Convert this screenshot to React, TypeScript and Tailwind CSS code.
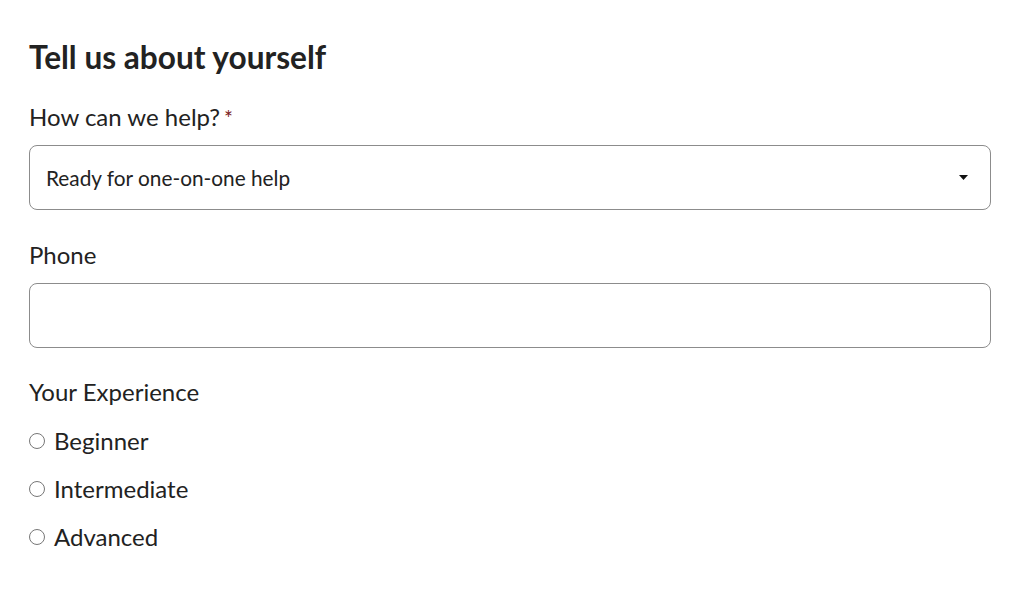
const OPTIONS = ["Beginner", "Intermediate", "Advanced"];

export default function App() {
  return (
    <div className="min-h-screen bg-white text-[#222222] font-['Lato','Noto_Sans',sans-serif]">
      <form className="w-[962px] ml-[29px] pt-[38px]">
        {/* heading */}
        <h2 className="text-[31.6px] leading-[38px] font-bold">Tell us about yourself</h2>

        {/* how can we help */}
        <label className="block mt-[27px] text-[24px] leading-[28px]">
          How can we help?<span className="text-[#7a1a1a] ml-[4px] text-[21px] leading-none">*</span>
        </label>
        <div className="relative mt-[14px] h-[65px] rounded-[8px] border border-[#8c8c8c] flex items-center pl-[16px]">
          <span className="text-[20.8px]">Ready for one-on-one help</span>
          <svg className="absolute right-[22px] top-[29px]" width="9" height="5" viewBox="0 0 9 5" aria-hidden="true">
            <polygon points="0,0 9,0 4.5,5" fill="#111111" />
          </svg>
        </div>

        {/* phone */}
        <label className="block mt-[31px] text-[24px] leading-[28px]">Phone</label>
        <input
          type="tel"
          className="block w-full mt-[14px] h-[65px] rounded-[8px] border border-[#8c8c8c] px-[16px] text-[21px] outline-none"
        />

        {/* experience */}
        <p className="mt-[30px] text-[24px] leading-[28px]">Your Experience</p>
        <div className="mt-[11px] flex flex-col">
          {OPTIONS.map((opt) => (
            <label key={opt} className="flex items-center h-[48px] text-[24px]">
              <span className="w-[16px] h-[16px] rounded-full border border-[#777777] mr-[9px]" />
              {opt}
            </label>
          ))}
        </div>
      </form>
    </div>
  );
}
